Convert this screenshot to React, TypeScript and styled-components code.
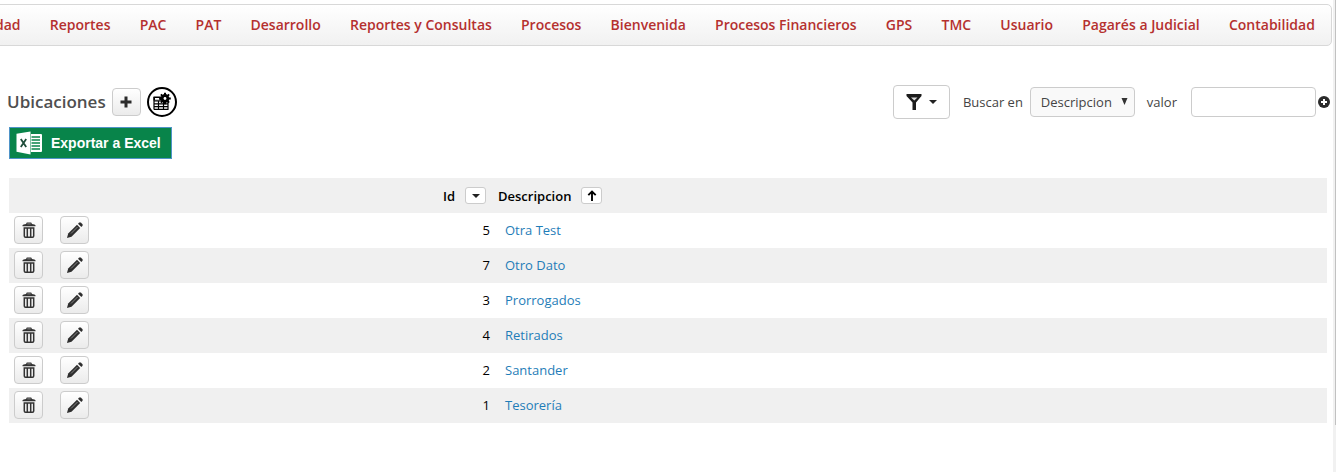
import React from "react";
import styled, { createGlobalStyle } from "styled-components";

const GlobalStyle = createGlobalStyle`
  *, *::before, *::after { box-sizing: border-box; }
  body {
    margin: 0;
    background: #fff;
    color: #444;
    font-family: "Trebuchet MS", "Open Sans", "Noto Sans", sans-serif;
    font-size: 13px;
    overflow: hidden;
  }
  button, input, select { font: inherit; color: inherit; margin: 0; padding: 0; }
`;

const Screen = styled.div`
  display: flex;
  min-height: 100vh;
`;

const Main = styled.main`
  flex: 1;
  min-width: 0;
  padding-top: 4px;
`;

const ScrollTrack = styled.div`
  width: 3px;
  background: #f1f1f1;
  padding-left: 2px;
`;

const ScrollThumb = styled.div`
  height: 90vh;
  background: #c1c1c1;
`;

const NavBar = styled.nav`
  display: flex;
  align-items: center;
  justify-content: space-between;
  height: 42px;
  margin: 0 1px 0 -6px;
  padding-right: 16px;
  border: 1px solid #d8d8d8;
  border-radius: 5px;
  background: linear-gradient(#fff, #f1f1f1);
`;

const NavLink = styled.a`
  color: #b5302f;
  font-size: 14px;
  font-weight: 600;
  line-height: 20px;
  white-space: nowrap;
  text-decoration: none;
`;

const Toolbar = styled.header`
  display: flex;
  align-items: center;
  justify-content: space-between;
  height: 34px;
  margin-top: 39px;
  padding: 0 3px 0 7px;
`;

const Group = styled.div`
  display: flex;
  align-items: center;
`;

const Title = styled.h1`
  margin: 0 6px 0 0;
  color: #4f4f4f;
  font-size: 17px;
  font-weight: 600;
  line-height: 24px;
`;

const IconButton = styled.button`
  display: inline-flex;
  align-items: center;
  justify-content: center;
  width: 29px;
  height: 28px;
  border: 1px solid #ccc;
  border-radius: 4px;
  background: linear-gradient(#fff, #ebebeb);
  color: #2b2b2b;
`;

const RoundButton = styled.button`
  display: inline-flex;
  align-items: center;
  justify-content: center;
  width: 30px;
  height: 30px;
  margin-left: 6px;
  border: 2px solid #000;
  border-radius: 50%;
  background: #fff;
`;

const FilterButton = styled.button`
  display: inline-flex;
  align-items: center;
  justify-content: center;
  gap: 7px;
  width: 57px;
  height: 34px;
  margin-right: 13px;
  border: 1px solid #ccc;
  border-radius: 4px;
  background: #fff;
  color: #222;
`;

const Label = styled.label`
  color: #444;
  line-height: 20px;
`;

const SelectBox = styled.div`
  position: relative;
  width: 105px;
  margin: 0 12px 0 7px;
`;

const Select = styled.select`
  display: block;
  appearance: none;
  width: 100%;
  height: 30px;
  padding-left: 10px;
  border: 1px solid #ccc;
  border-radius: 4px;
  background: #f9f9f9;
`;

const SelectArrow = styled.svg`
  position: absolute;
  top: 11px;
  right: 7px;
  pointer-events: none;
`;

const TextBox = styled.input`
  width: 125px;
  height: 30px;
  margin: 0 2px 0 14px;
  padding: 0 8px;
  border: 1px solid #ccc;
  border-radius: 4px;
  background: #fff;
`;

const PlainButton = styled.button`
  display: inline-flex;
  border: 0;
  background: none;
`;

const ExportButton = styled.button`
  display: flex;
  align-items: center;
  gap: 8px;
  width: 163px;
  height: 32px;
  margin: 8px 0 0 9px;
  padding-left: 6px;
  border: 1px solid #4f94c8;
  background: #08844a;
  color: #fff;
  font-family: "Liberation Sans", Arial, sans-serif;
  font-size: 14px;
  font-weight: 700;
  white-space: nowrap;
`;

const TableArea = styled.section`
  padding: 19px 6px 0 9px;
`;

const Table = styled.table`
  width: 100%;
  table-layout: fixed;
  border-collapse: collapse;
  line-height: 20px;
`;

const Row = styled.tr<{ $shaded?: boolean }>`
  height: 35px;
  background: ${(p) => (p.$shaded ? "#f0f0f0" : "#fff")};
`;

const Column = styled.col<{ $width?: string }>`
  width: ${(p) => p.$width ?? "auto"};
`;

const HeadCell = styled.th<{ $end?: boolean }>`
  padding: 0 5px 0 7px;
  color: #000;
  font-weight: 600;
  text-align: ${(p) => (p.$end ? "right" : "left")};
`;

const HeadContent = styled.div<{ $end?: boolean }>`
  display: flex;
  align-items: center;
  justify-content: ${(p) => (p.$end ? "flex-end" : "flex-start")};
  gap: 10px;
`;

const Cell = styled.td<{ $end?: boolean; $text?: boolean }>`
  padding: ${(p) => (p.$text ? "0 14px 2px" : p.$end ? "0 1px 2px" : "0 5px 2px")};
  color: #000;
  vertical-align: middle;
  text-align: ${(p) => (p.$end ? "right" : "left")};
`;

const CellActions = styled.div`
  display: flex;
`;

const SortButton = styled.button`
  display: inline-flex;
  align-items: center;
  justify-content: center;
  width: 21px;
  height: 17px;
  border: 1px solid #ccc;
  border-radius: 3px;
  background: #fff;
`;

const RowLink = styled.a`
  color: #1f7db8;
  text-decoration: none;
`;

const Caret = () => (
  <svg width="8" height="4" viewBox="0 0 8 4" aria-hidden="true">
    <path d="M0 0h8L4 4z" fill="#222" />
  </svg>
);

const PlusIcon = () => (
  <svg width="12" height="12" viewBox="0 0 12 12" aria-hidden="true">
    <path d="M4.5 .5h3v4h4v3h-4v4h-3v-4h-4v-3h4z" fill="#2b2b2b" />
  </svg>
);

const TableGearIcon = () => (
  <svg width="20" height="20" viewBox="0 0 20 20" aria-hidden="true">
    <path
      d="M2 5v12.500M2 9h14M2 11.800h14M2 14.600h14M2 17.300h14.500M6.500 9v8.500M11.500 9v8.500M16 9v8.500"
      fill="none"
      stroke="#000"
      strokeWidth="1.200"
    />
    <path d="M1.500 4.500h8v4h-8z" fill="#000" />
    <path d="M3 6h4.500v1.800H3z" fill="#fff" />
    <circle cx="13" cy="6.500" r="4.400" fill="#000" />
    <path
      d="M13 0.700v11.600M7.200 6.500h11.600M8.900 2.400l8.200 8.200M17.100 2.400l-8.200 8.200"
      stroke="#000"
      strokeWidth="2"
    />
    <circle cx="13" cy="6.500" r="1.400" fill="#fff" />
  </svg>
);

const FunnelIcon = () => (
  <svg width="16" height="16" viewBox="0 0 16 16" aria-hidden="true">
    <path d="M0.500 0h15v2l-5.500 6.500V16H6.500V8.500L.5 2z" fill="#1c1c1c" />
    <path d="M5 3.500h6.500L8.300 6.500z" fill="#ddd" />
  </svg>
);

const CirclePlusIcon = () => (
  <svg width="12" height="12" viewBox="0 0 12 12" aria-hidden="true">
    <circle cx="6" cy="6" r="6" fill="#2b2b2b" />
    <path d="M6 3v6M3 6h6" stroke="#fff" strokeWidth="2" />
  </svg>
);

const ExcelIcon = () => (
  <svg width="27" height="26" viewBox="0 0 27 26" aria-hidden="true">
    <path d="M15 4h10q1 0 1 1v16q0 1-1 1H15z" fill="#fff" />
    <path
      d="M15.500 7h8.500M15.500 10h8.500M15.500 13h8.500M15.500 16h8.500M15.500 19h8.500"
      stroke="#08844a"
      strokeWidth="1.300"
    />
    <path d="M0.500 3.800L14.500 1.500v23L.5 21.800z" fill="#fff" />
    <path d="M4.800 9l5.400 8M10.200 9l-5.400 8" stroke="#1f4d3a" strokeWidth="1.800" />
  </svg>
);

const TrashIcon = () => (
  <svg width="14" height="16" viewBox="0 0 14 16" aria-hidden="true">
    <path d="M.5 4.300V3.300Q1 2.300 4 2L4.800.5h4.400L10 2q3 .3 3.500 1.300v1z" fill="#333" />
    <path d="M5.300 1.500h3.400v.8H5.300z" fill="#999" />
    <path
      d="M2.300 6h9.400v8q0 1.200-1.200 1.200h-7q-1.200 0-1.200-1.200zM5.300 6v9M8.700 6v9"
      fill="#f2f2f2"
      stroke="#333"
      strokeWidth="1.500"
    />
  </svg>
);

const PencilIcon = () => (
  <svg width="16" height="16" viewBox="0 0 16 16" aria-hidden="true">
    <path d="M0 16l1.200-4.500L10 2.800 13.200 6 4.500 14.700z" fill="#2e2e2e" />
    <path d="M11 1.700l1-1q1-.8 2 0l1.300 1.300q.8 1 0 2l-1 1z" fill="#2e2e2e" />
    <path d="M4 11.500l6.500-6.500" stroke="#999" strokeWidth=".8" />
  </svg>
);

const ArrowUpIcon = () => (
  <svg width="10" height="11" viewBox="0 0 10 11" aria-hidden="true">
    <path d="M5 11V1.500M1.300 5.200L5 1.500l3.700 3.700" fill="none" stroke="#000" strokeWidth="1.900" />
  </svg>
);

const menu = [
  "dad", "Reportes", "PAC", "PAT", "Desarrollo", "Reportes y Consultas", "Procesos",
  "Bienvenida", "Procesos Financieros", "GPS", "TMC", "Usuario", "Pagarés a Judicial",
  "Contabilidad",
];

const rows = [
  { id: 5, name: "Otra Test" },
  { id: 7, name: "Otro Dato" },
  { id: 3, name: "Prorrogados" },
  { id: 4, name: "Retirados" },
  { id: 2, name: "Santander" },
  { id: 1, name: "Tesorería" },
];

export default function App() {
  return (
    <>
      <GlobalStyle />
      <Screen>
        <Main>
          <NavBar>
            {menu.map((item) => (
              <NavLink key={item} href="#">{item}</NavLink>
            ))}
          </NavBar>
          <Toolbar>
            <Group>
              <Title>Ubicaciones</Title>
              <IconButton type="button" aria-label="Agregar"><PlusIcon /></IconButton>
              <RoundButton type="button" aria-label="Configurar tabla"><TableGearIcon /></RoundButton>
            </Group>
            <Group>
              <FilterButton type="button" aria-label="Filtrar"><FunnelIcon /><Caret /></FilterButton>
              <Label htmlFor="campo">Buscar en</Label>
              <SelectBox>
                <Select id="campo" defaultValue="Descripcion">
                  <option>Descripcion</option>
                </Select>
                <SelectArrow width="7" height="7" viewBox="0 0 7 7" aria-hidden="true">
                  <path d="M.5 0h6l-3 7z" fill="#333" />
                </SelectArrow>
              </SelectBox>
              <Label htmlFor="valor">valor</Label>
              <TextBox id="valor" type="text" />
              <PlainButton type="button" aria-label="Agregar filtro"><CirclePlusIcon /></PlainButton>
            </Group>
          </Toolbar>
          <ExportButton type="button"><ExcelIcon />Exportar a Excel</ExportButton>
          <TableArea>
            <Table>
              <colgroup>
                <Column $width="46px" />
                <Column $width="46px" />
                <Column $width="390px" />
                <Column />
              </colgroup>
              <thead>
                <Row $shaded>
                  <HeadCell colSpan={2} />
                  <HeadCell $end>
                    <HeadContent $end>
                      Id
                      <SortButton type="button" aria-label="Ordenar por Id"><Caret /></SortButton>
                    </HeadContent>
                  </HeadCell>
                  <HeadCell>
                    <HeadContent>
                      Descripcion
                      <SortButton type="button" aria-label="Ordenar por Descripcion"><ArrowUpIcon /></SortButton>
                    </HeadContent>
                  </HeadCell>
                </Row>
              </thead>
              <tbody>
                {rows.map((row, i) => (
                  <Row key={row.id} $shaded={i % 2 === 1}>
                    <Cell>
                      <CellActions>
                        <IconButton type="button" aria-label="Eliminar"><TrashIcon /></IconButton>
                      </CellActions>
                    </Cell>
                    <Cell>
                      <CellActions>
                        <IconButton type="button" aria-label="Editar"><PencilIcon /></IconButton>
                      </CellActions>
                    </Cell>
                    <Cell $end>{row.id}</Cell>
                    <Cell $text><RowLink href="#">{row.name}</RowLink></Cell>
                  </Row>
                ))}
              </tbody>
            </Table>
          </TableArea>
        </Main>
        <ScrollTrack><ScrollThumb /></ScrollTrack>
      </Screen>
    </>
  );
}
